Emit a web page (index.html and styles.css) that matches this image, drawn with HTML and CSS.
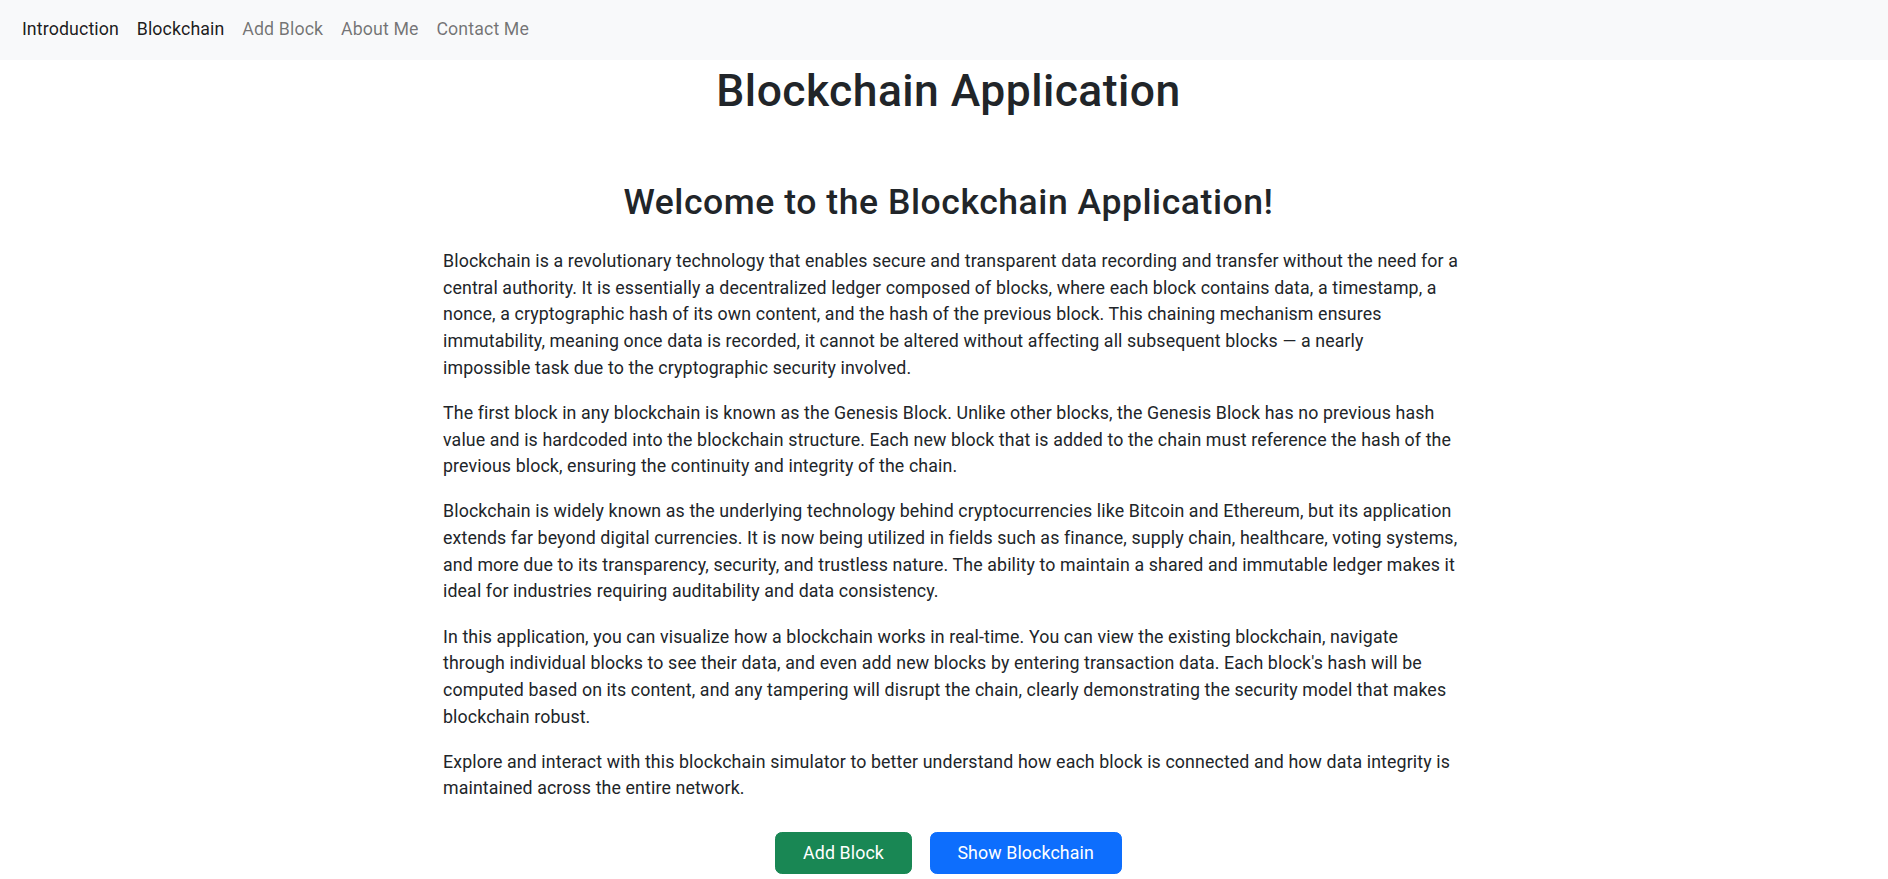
FILE: index.html
```html
<!DOCTYPE html>
<html lang="en">
<head>
<meta charset="utf-8">
<title>Blockchain Application</title>
<link rel="stylesheet" href="styles.css">
</head>
<body>
<nav class="navbar">
  <ul class="nav-list">
    <li><a class="nav-link nav-link-strong" href="#">Introduction</a></li>
    <li><a class="nav-link nav-link-strong" href="#">Blockchain</a></li>
    <li><a class="nav-link" href="#">Add Block</a></li>
    <li><a class="nav-link" href="#">About Me</a></li>
    <li><a class="nav-link" href="#">Contact Me</a></li>
  </ul>
</nav>
<main class="page">
  <h1 class="page-title">Blockchain Application</h1>
  <section class="intro">
    <h2 class="intro-title">Welcome to the Blockchain Application!</h2>
    <p>Blockchain is a revolutionary technology that enables secure and transparent data recording and transfer without the need for a<br>
    central authority. It is essentially a decentralized ledger composed of blocks, where each block contains data, a timestamp, a<br>
    nonce, a cryptographic hash of its own content, and the hash of the previous block. This chaining mechanism ensures<br>
    immutability, meaning once data is recorded, it cannot be altered without affecting all subsequent blocks — a nearly<br>
    impossible task due to the cryptographic security involved.</p>
    <p>The first block in any blockchain is known as the Genesis Block. Unlike other blocks, the Genesis Block has no previous hash<br>
    value and is hardcoded into the blockchain structure. Each new block that is added to the chain must reference the hash of the<br>
    previous block, ensuring the continuity and integrity of the chain.</p>
    <p>Blockchain is widely known as the underlying technology behind cryptocurrencies like Bitcoin and Ethereum, but its application<br>
    extends far beyond digital currencies. It is now being utilized in fields such as finance, supply chain, healthcare, voting systems,<br>
    and more due to its transparency, security, and trustless nature. The ability to maintain a shared and immutable ledger makes it<br>
    ideal for industries requiring auditability and data consistency.</p>
    <p>In this application, you can visualize how a blockchain works in real-time. You can view the existing blockchain, navigate<br>
    through individual blocks to see their data, and even add new blocks by entering transaction data. Each block's hash will be<br>
    computed based on its content, and any tampering will disrupt the chain, clearly demonstrating the security model that makes<br>
    blockchain robust.</p>
    <p>Explore and interact with this blockchain simulator to better understand how each block is connected and how data integrity is<br>
    maintained across the entire network.</p>
    <div class="actions">
      <button class="btn btn-success" type="button">Add Block</button>
      <button class="btn btn-primary" type="button">Show Blockchain</button>
    </div>
  </section>
</main>
</body>
</html>
```
FILE: styles.css
```css
html, body {
  margin: 0;
  padding: 0;
}

body {
  font-family: "Segoe UI", Roboto, "Noto Sans", sans-serif;
  font-size: 17.78px;
  line-height: 26.67px;
  letter-spacing: 0.12px;
  color: #212529;
  background: #ffffff;
}

.navbar {
  background: #f8f9fa;
  height: 60px;
  box-sizing: border-box;
  padding: 0 13px 1px;
  display: flex;
  align-items: center;
}

.nav-list {
  display: flex;
  list-style: none;
  margin: 0;
  padding: 0;
}

.nav-link {
  display: block;
  padding: 0 8.9px;
  color: rgba(0, 0, 0, 0.55);
  text-decoration: none;
}

.nav-link-strong {
  color: rgba(0, 0, 0, 0.9);
}

.page {
  display: flex;
  flex-direction: column;
  width: 1011px;
  margin-left: calc(50% - 501px);
}

.page-title {
  margin: 5px 0 0;
  font-size: 44.44px;
  line-height: 53.33px;
  font-weight: 500;
  letter-spacing: 0.45px;
  text-align: center;
}

.intro {
  margin-top: 63px;
}

.intro-title {
  margin: 0 0 24px;
  font-size: 35.56px;
  line-height: 42.67px;
  font-weight: 500;
  letter-spacing: 0.55px;
  text-align: center;
}

.intro p {
  margin: 0 -40px 18.5px 0;
}

.actions {
  display: flex;
  justify-content: center;
  gap: 18px;
  margin-top: 30px;
}

.btn {
  font-family: inherit;
  font-size: 17.78px;
  line-height: 26.67px;
  letter-spacing: 0.12px;
  padding: 6.7px 26.7px;
  border: 1.1px solid transparent;
  border-radius: 6.7px;
  color: #ffffff;
  cursor: pointer;
}

.btn-success {
  background: #198754;
  border-color: #198754;
}

.btn-primary {
  background: #0d6efd;
  border-color: #0d6efd;
}
```
